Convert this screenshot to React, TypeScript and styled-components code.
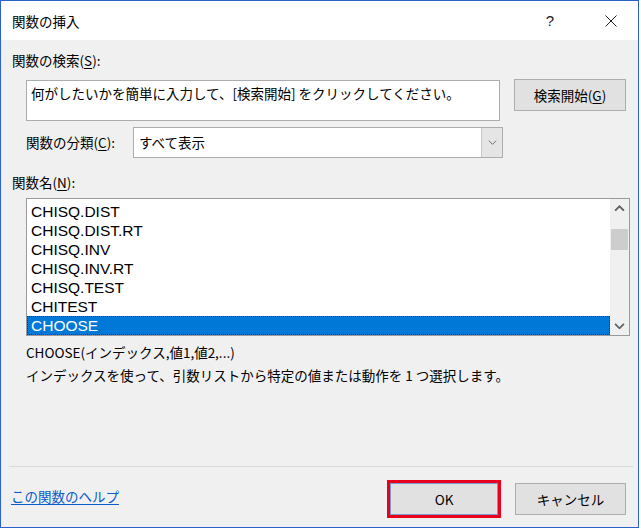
import * as React from 'react';
import styled, { createGlobalStyle } from 'styled-components';

const GlobalStyle = createGlobalStyle`
  html, body {
    margin: 0;
    padding: 0;
    background: #ffffff;
  }
  body {
    font-family: "Noto Sans CJK JP", "Liberation Sans", sans-serif;
    font-size: 13px;
    color: #000000;
  }
`;

const cjk = `"Noto Sans CJK JP", "Liberation Sans", sans-serif`;
const latin = `"Liberation Sans", "Noto Sans CJK JP", sans-serif`;

const functions = [
  'CHISQ.DIST',
  'CHISQ.DIST.RT',
  'CHISQ.INV',
  'CHISQ.INV.RT',
  'CHISQ.TEST',
  'CHITEST',
  'CHOOSE',
];

const Window = styled.div`
  width: 637px;
  height: 526px;
  border: 1px solid #2b62c9;
  background: #f0f0f0;
  display: flex;
  flex-direction: column;
`;

const TitleBar = styled.div`
  height: 39px;
  background: #ffffff;
  display: flex;
  align-items: center;
  padding-left: 11px;
  padding-right: 4px;
  gap: 15px;
  font-family: ${cjk};
  font-size: 13.5px;
`;

const Title = styled.div`
  flex: 1;
`;

const TitleButton = styled.div`
  width: 46px;
  height: 39px;
  display: flex;
  align-items: center;
  justify-content: center;
  font-family: ${latin};
  font-size: 15px;
  color: #202020;
`;

const Body = styled.div`
  flex: 1;
  display: flex;
  flex-direction: column;
  padding: 0 10px 0 11px;
`;

const Label = styled.div<{ $top: number }>`
  margin-top: ${(p) => p.$top}px;
  height: 20px;
  line-height: 20px;
  font-family: ${cjk};
  font-size: 13.5px;
  white-space: nowrap;
`;

const U = styled.span`
  text-decoration: underline;
  text-underline-offset: 2px;
`;

const Row = styled.div<{ $top: number }>`
  display: flex;
  align-items: flex-start;
  margin-top: ${(p) => p.$top}px;
`;

const SearchBox = styled.div`
  margin-left: 14px;
  width: 474px;
  height: 41px;
  background: #ffffff;
  border: 1px solid #acacac;
  padding: 2px 4px;
  box-sizing: border-box;
  font-family: ${cjk};
  font-size: 13.5px;
  line-height: 20px;
  white-space: nowrap;
  overflow: hidden;
`;

const Button = styled.div<{ $w: number; $focus?: boolean }>`
  width: ${(p) => p.$w}px;
  height: 32px;
  box-sizing: border-box;
  background: #e1e1e1;
  border: 1px solid #adadad;
  display: flex;
  align-items: center;
  justify-content: center;
  font-family: ${cjk};
  font-size: 13.5px;
  ${(p) =>
    p.$focus &&
    `
    outline: 3px solid #e8001c;
    outline-offset: 0px;
    border-color: #7a9bd0;
  `}
`;

const SearchButton = styled(Button)`
  margin-left: 14px;
  margin-top: -1px;
`;

const CategoryLabel = styled.div`
  margin-left: 14px;
  width: 107px;
  height: 30px;
  line-height: 30px;
  font-family: ${cjk};
  font-size: 13.5px;
  white-space: nowrap;
`;

const Combo = styled.div`
  width: 370px;
  height: 31px;
  box-sizing: border-box;
  background: #ffffff;
  border: 1px solid #acacac;
  display: flex;
  font-family: ${cjk};
  font-size: 13.5px;
`;

const ComboText = styled.div`
  flex: 1;
  padding-left: 5px;
  line-height: 29px;
`;

const ComboArrow = styled.div`
  width: 20px;
  background: #e5e5e5;
  border-left: 1px solid #c8c8c8;
  display: flex;
  align-items: center;
  justify-content: center;
`;

const List = styled.div`
  margin-left: 14px;
  margin-top: 6px;
  width: 604px;
  height: 138px;
  box-sizing: border-box;
  background: #ffffff;
  border: 1px solid #9a9a9a;
  display: flex;
`;

const Items = styled.div`
  flex: 1;
  padding-top: 3px;
  display: flex;
  flex-direction: column;
`;

const Item = styled.div<{ $selected?: boolean }>`
  height: 19px;
  line-height: 18px;
  margin-left: 0px;
  padding-left: 3px;
  font-family: ${latin};
  font-size: 15.5px;
  box-sizing: border-box;
  color: ${(p) => (p.$selected ? '#ffffff' : '#000000')};
  background: ${(p) => (p.$selected ? '#0078d7' : 'transparent')};
  border: 1px ${(p) => (p.$selected ? 'dotted #333333' : 'solid transparent')};
`;

const Scrollbar = styled.div`
  width: 19px;
  background: #f0f0f0;
  display: flex;
  flex-direction: column;
  align-items: center;
`;

const ScrollArrow = styled.div`
  height: 18px;
  width: 17px;
  display: flex;
  align-items: center;
  justify-content: center;
`;

const ScrollTrack = styled.div`
  flex: 1;
  width: 17px;
`;

const Thumb = styled.div`
  margin-top: 12px;
  height: 21px;
  background: #cdcdcd;
`;

const Info = styled.div<{ $top: number }>`
  margin-left: 14px;
  margin-top: ${(p) => p.$top}px;
  height: 20px;
  line-height: 20px;
  font-family: ${cjk};
  font-size: 13.5px;
  white-space: nowrap;
`;

const Spacer = styled.div`
  flex: 1;
`;

const Separator = styled.div`
  height: 1px;
  margin-left: -3px;
  margin-right: -5px;
  background: #dadada;
`;

const Footer = styled.div`
  height: 60px;
  display: flex;
  align-items: center;
`;

const HelpLink = styled.a`
  flex: 1;
  color: #0b5cc9;
  text-decoration: underline;
  text-underline-offset: 2px;
  font-family: ${cjk};
  font-size: 13.5px;
  margin-left: -1px;
  margin-top: -3px;
`;

const FooterButtons = styled.div`
  display: flex;
  gap: 17px;
  margin-right: 2px;
  margin-top: 4px;
`;

const Chevron = ({ dir, color, size, weight }: { dir: 'up' | 'down'; color: string; size: number; weight: number }) => (
  <svg width={size} height={size * 0.6} viewBox="0 0 10 6">
    <path
      d={dir === 'up' ? 'M1 5.2 L5 1.2 L9 5.2' : 'M1 0.8 L5 4.8 L9 0.8'}
      fill="none"
      stroke={color}
      strokeWidth={weight}
    />
  </svg>
);

export default function App() {
  return (
    <>
      <GlobalStyle />
      <Window>
        <TitleBar>
          <Title>関数の挿入</Title>
          <TitleButton>?</TitleButton>
          <TitleButton>
            <svg width="12" height="12" viewBox="0 0 12 12">
              <path d="M0.5 0.5 L11.5 11.5 M11.5 0.5 L0.5 11.5" stroke="#202020" strokeWidth="1" />
            </svg>
          </TitleButton>
        </TitleBar>
        <Body>
          <Label $top={10}>
            関数の検索(<U>S</U>):
          </Label>
          <Row $top={10}>
            <SearchBox>何がしたいかを簡単に入力して、[検索開始] をクリックしてください。</SearchBox>
            <SearchButton $w={112}>
              検索開始(<U>G</U>)
            </SearchButton>
          </Row>
          <Row $top={6}>
            <CategoryLabel>
              関数の分類(<U>C</U>):
            </CategoryLabel>
            <Combo>
              <ComboText>すべて表示</ComboText>
              <ComboArrow>
                <Chevron dir="down" color="#606060" size={9} weight={1} />
              </ComboArrow>
            </Combo>
          </Row>
          <Label $top={14}>
            関数名(<U>N</U>):
          </Label>
          <List>
            <Items>
              {functions.map((f) => (
                <Item key={f} $selected={f === 'CHOOSE'}>
                  {f}
                </Item>
              ))}
            </Items>
            <Scrollbar>
              <ScrollArrow>
                <Chevron dir="up" color="#606060" size={11} weight={1.6} />
              </ScrollArrow>
              <ScrollTrack>
                <Thumb />
              </ScrollTrack>
              <ScrollArrow>
                <Chevron dir="down" color="#606060" size={11} weight={1.6} />
              </ScrollArrow>
            </Scrollbar>
          </List>
          <Info $top={6}>CHOOSE(インデックス,値1,値2,...)</Info>
          <Info $top={3}>インデックスを使って、引数リストから特定の値または動作を 1 つ選択します。</Info>
          <Spacer />
          <Separator />
          <Footer>
            <HelpLink>この関数のヘルプ</HelpLink>
            <FooterButtons>
              <Button $w={108} $focus>
                OK
              </Button>
              <Button $w={111}>キャンセル</Button>
            </FooterButtons>
          </Footer>
        </Body>
      </Window>
    </>
  );
}
